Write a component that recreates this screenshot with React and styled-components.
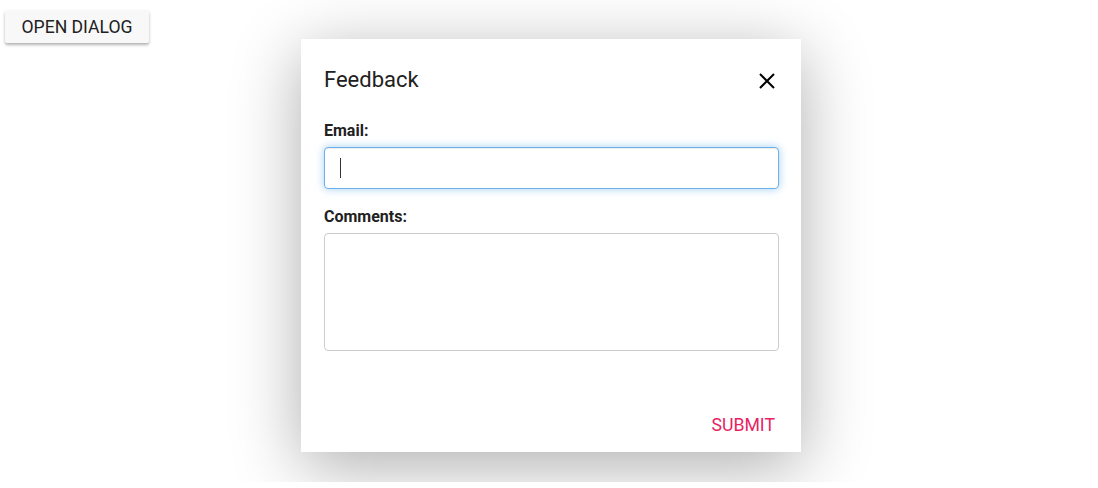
import styled, { createGlobalStyle } from "styled-components";

const GlobalStyle = createGlobalStyle`
  body {
    margin: 0;
    background: #fff;
    font-family: Roboto, "Liberation Sans", sans-serif;
    color: #212121;
  }
`;

const Page = styled.div`
  position: relative;
  width: 100%;
  height: 488px;
  overflow: hidden;
`;

const OpenButton = styled.button`
  margin: 10px 0 0 5px;
  width: 144px;
  height: 33px;
  border: none;
  border-radius: 2px;
  background: #f8f8f8;
  box-shadow: 0 2px 3px rgba(0, 0, 0, 0.3);
  font-family: Roboto, "Liberation Sans", sans-serif;
  font-size: 17.6px;
  color: #212121;
  text-transform: uppercase;
  padding: 0;
`;

const Overlay = styled.div`
  position: absolute;
  top: 0;
  left: 0;
  right: 0;
  height: 482px;
  overflow: hidden;
  display: flex;
  justify-content: center;
  padding-top: 39px;
  box-sizing: border-box;
`;

const Dialog = styled.div`
  width: 500px;
  height: 413px;
  margin-left: 4px;
  background: #fff;
  box-shadow: 0 14px 64px rgba(0, 0, 0, 0.32);
  padding: 25px 22px 0 23px;
  box-sizing: border-box;
  display: flex;
  flex-direction: column;
`;

const Header = styled.div`
  display: flex;
  align-items: center;
  justify-content: space-between;
  height: 32px;
`;

const Title = styled.h2`
  margin: 0;
  font-size: 22px;
  font-weight: 400;
  line-height: 32px;
  color: #212121;
`;

const CloseButton = styled.button`
  width: 24px;
  height: 24px;
  border: none;
  background: none;
  padding: 0;
  margin-top: 2px;
  display: flex;
  color: #000;
`;

const Label = styled.label`
  display: block;
  font-size: 16px;
  font-weight: 700;
  line-height: 20px;
  color: #212121;
  margin: ${(p) => p.$top}px 0 6px;
`;

const FieldWrap = styled.div`
  position: relative;
`;

const Input = styled.input`
  display: block;
  width: 100%;
  height: 42px;
  box-sizing: border-box;
  border: 1px solid ${(p) => (p.$focused ? "#6eb0ea" : "#ccc")};
  border-radius: 4px;
  box-shadow: ${(p) =>
    p.$focused
      ? "inset 0 1px 1px rgba(0,0,0,.075), 0 0 8px rgba(102,175,233,.6)"
      : "none"};
  padding: 0 15px;
  font-family: inherit;
  font-size: 15px;
  outline: none;
`;

const Caret = styled.span`
  position: absolute;
  left: 16px;
  top: 11px;
  width: 1px;
  height: 20px;
  background: #333;
`;

const TextArea = styled.textarea`
  display: block;
  width: 100%;
  height: 118px;
  box-sizing: border-box;
  border: 1px solid #ccc;
  border-radius: 4px;
  resize: none;
  outline: none;
  font-family: inherit;
  font-size: 15px;
  padding: 8px 15px;
`;

const Footer = styled.div`
  margin-top: auto;
  display: flex;
  justify-content: flex-end;
  padding: 0 4px 17px 0;
`;

const SubmitButton = styled.button`
  border: none;
  background: none;
  padding: 0;
  font-family: Roboto, "Liberation Sans", sans-serif;
  font-size: 17.7px;
  line-height: 20px;
  color: #e91e63;
  text-transform: uppercase;
`;

export default function App() {
  return (
    <>
      <GlobalStyle />
      <Page>
        <OpenButton>Open Dialog</OpenButton>
        <Overlay>
          <Dialog>
            <Header>
              <Title>Feedback</Title>
              <CloseButton aria-label="close">
                <svg width="24" height="24" viewBox="0 0 24 24">
                  <path
                    d="M5 5L19 19M19 5L5 19"
                    stroke="currentColor"
                    strokeWidth="2"
                    fill="none"
                  />
                </svg>
              </CloseButton>
            </Header>
            <Label $top={25}>Email:</Label>
            <FieldWrap>
              <Input $focused type="email" />
              <Caret />
            </FieldWrap>
            <Label $top={18}>Comments:</Label>
            <TextArea />
            <Footer>
              <SubmitButton>Submit</SubmitButton>
            </Footer>
          </Dialog>
        </Overlay>
      </Page>
    </>
  );
}
